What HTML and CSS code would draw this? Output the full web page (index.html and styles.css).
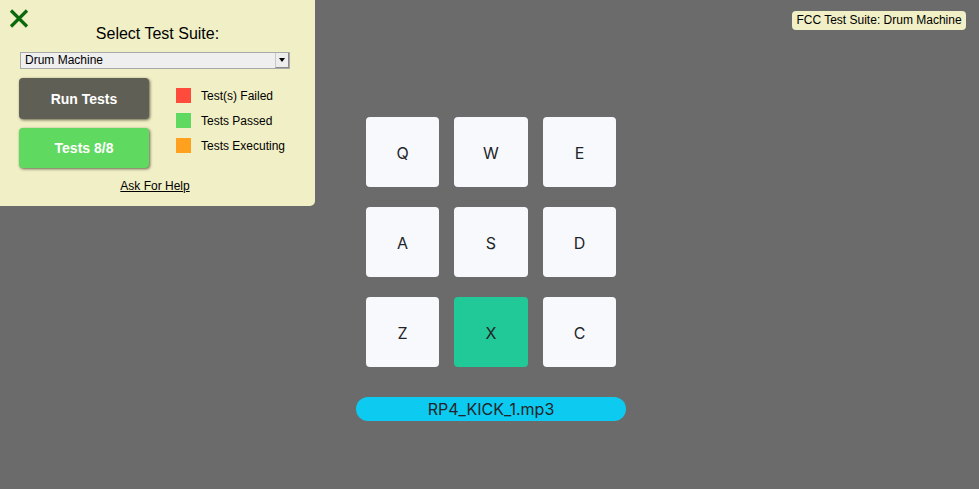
FILE: index.html
```html
<!DOCTYPE html>
<html>
<head>
<meta charset="utf-8">
<link rel="stylesheet" href="styles.css">
</head>
<body>
<main class="stage">
  <div id="drum-machine" class="drum">
    <div class="pads">
      <div class="pad">Q</div>
      <div class="pad">W</div>
      <div class="pad">E</div>
      <div class="pad">A</div>
      <div class="pad">S</div>
      <div class="pad">D</div>
      <div class="pad">Z</div>
      <div class="pad pad-active">X</div>
      <div class="pad">C</div>
    </div>
    <div id="display" class="display">RP4_KICK_1.mp3</div>
  </div>
</main>

<aside class="suite-panel">
  <svg class="close-x" width="20" height="19" viewBox="0 0 20 19" aria-hidden="true">
    <path d="M2 1.5 L18 17.5 M18 1.5 L2 17.5" stroke="#0b6a0b" stroke-width="3.2" fill="none"/>
  </svg>
  <div class="suite-title">Select Test Suite:</div>
  <div class="fake-select">
    <span class="fake-select-text">Drum Machine</span>
    <span class="fake-select-arrow"><span class="tri"></span></span>
  </div>
  <div class="suite-row">
    <div class="suite-buttons">
      <div class="btn btn-run">Run Tests</div>
      <div class="btn btn-pass">Tests 8/8</div>
    </div>
    <ul class="legend">
      <li><span class="sw sw-red"></span>Test(s) Failed</li>
      <li><span class="sw sw-green"></span>Tests Passed</li>
      <li><span class="sw sw-orange"></span>Tests Executing</li>
    </ul>
  </div>
  <a class="help" href="#">Ask For Help</a>
</aside>

<div class="suite-badge">FCC Test Suite: Drum Machine</div>
</body>
</html>
```

FILE: styles.css
```css
* { box-sizing: border-box; }
html, body { margin: 0; padding: 0; }
body {
  background: #6b6b6b;
  width: 979px;
  height: 489px;
  overflow: hidden;
  font-family: Inter, "Noto Sans", sans-serif;
}

.stage {
  display: flex;
  justify-content: center;
  padding-top: 117px;
  padding-left: 3px;
}
.drum {
  width: 270px;
  display: flex;
  flex-direction: column;
  align-items: center;
}
.pads {
  display: grid;
  grid-template-columns: 73px 74px 73px;
  grid-auto-rows: 70px;
  column-gap: 15px;
  row-gap: 20px;
}
.pad {
  background: #f8f9fd;
  border-radius: 4px;
  display: flex;
  align-items: center;
  justify-content: center;
  font-size: 16px;
  color: #212529;
  padding-top: 1px;
}
.pad-active { background: #20c997; }
.display {
  margin-top: 30px;
  width: 270px;
  height: 24px;
  border-radius: 12px;
  background: #0dcaf0;
  color: #212529;
  font-size: 16px;
  line-height: 24px;
  text-align: center;
}

.suite-panel {
  position: absolute;
  left: 0;
  top: 0;
  width: 315px;
  height: 206px;
  background: #f0efc6;
  border-bottom-right-radius: 5px;
  font-family: "Liberation Sans", Arial, sans-serif;
  color: #000;
  padding-top: 25px;
  display: flex;
  flex-direction: column;
  align-items: center;
}
.close-x {
  position: absolute;
  left: 9px;
  top: 9px;
}
.suite-title {
  font-size: 16px;
  line-height: 18px;
  height: 18px;
}
.fake-select {
  margin-top: 9px;
  width: 270px;
  height: 17px;
  background: #efefef;
  border: 1px solid #a9a9a9;
  display: flex;
  align-items: center;
  justify-content: space-between;
  margin-right: 5px;
}
.fake-select-text {
  font-size: 12px;
  padding-left: 4px;
  line-height: 15px;
}
.fake-select-arrow {
  width: 14px;
  height: 15px;
  background: #ededed;
  border-left: 1px solid #c8c8c8;
  border-right: 1px solid #8a8a8a;
  border-bottom: 1px solid #8a8a8a;
  display: flex;
  align-items: center;
  justify-content: center;
}
.tri {
  width: 0;
  height: 0;
  border-left: 3.5px solid transparent;
  border-right: 3.5px solid transparent;
  border-top: 4px solid #000;
}
.suite-row {
  margin-top: 9px;
  width: 315px;
  display: flex;
  padding-left: 19px;
}
.suite-buttons {
  display: flex;
  flex-direction: column;
  gap: 9px;
  width: 130px;
}
.btn {
  height: 41px;
  border-radius: 4px;
  color: #fff;
  font-size: 14px;
  font-weight: bold;
  display: flex;
  align-items: center;
  justify-content: center;
  box-shadow: 1px 1px 3px rgba(40, 40, 20, 0.7);
}
.btn-run { background: #5f5f55; }
.btn-pass { background: #5fd95f; height: 40px; }
.legend {
  list-style: none;
  margin: 0;
  padding: 10px 0 0 27px;
  display: flex;
  flex-direction: column;
  gap: 10px;
}
.legend li {
  display: flex;
  align-items: center;
  height: 15px;
  font-size: 12px;
  white-space: nowrap;
}
.sw {
  width: 15px;
  height: 15px;
  margin-right: 10px;
  flex: none;
}
.sw-red { background: #ff4b3c; }
.sw-green { background: #5fd95f; }
.sw-orange { background: #ffa01e; }
.help {
  margin-top: 11px;
  margin-right: 5px;
  font-size: 12px;
  color: #000;
  text-decoration: underline;
  line-height: 14px;
}

.suite-badge {
  position: absolute;
  top: 11px;
  right: 13px;
  height: 19px;
  width: 174px;
  background: #f0efc6;
  border-radius: 4px;
  font-family: "Liberation Sans", Arial, sans-serif;
  font-size: 12px;
  line-height: 19px;
  text-align: center;
  color: #000;
}
```
